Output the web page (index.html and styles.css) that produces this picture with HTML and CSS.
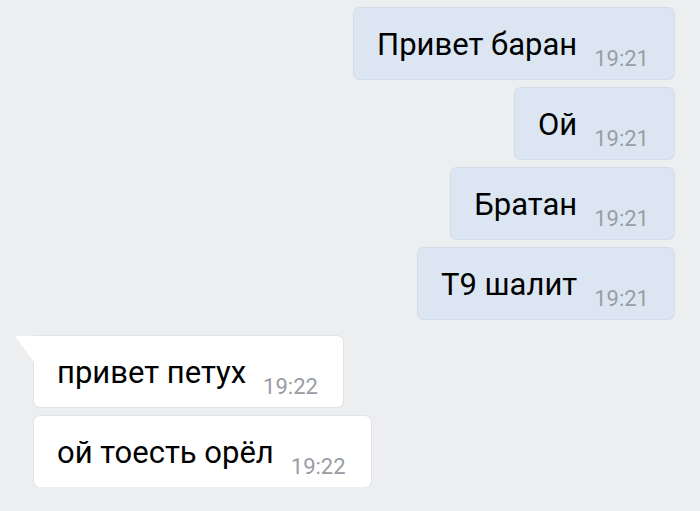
FILE: index.html
```html
<!DOCTYPE html>
<html lang="ru">
<head>
    <meta charset="UTF-8">
    <meta name="viewport" content="width=device-width, initial-scale=1.0">
    <title>Диалог</title>
    <link rel="stylesheet" href="styles.css">
</head>
<body>
    <div class="chat">
        <div class="group outgoing">
            <div class="bubble"><span class="text">Привет баран</span><span class="time">19:21</span></div>
            <div class="bubble"><span class="text">Ой</span><span class="time">19:21</span></div>
            <div class="bubble"><span class="text">Братан</span><span class="time">19:21</span></div>
            <div class="bubble"><span class="text">Т9 шалит</span><span class="time">19:21</span></div>
        </div>
        <div class="group incoming">
            <div class="bubble first"><span class="text">привет петух</span><span class="time">19:22</span></div>
            <div class="bubble"><span class="text">ой тоесть орёл</span><span class="time">19:22</span></div>
        </div>
    </div>
</body>
</html>
```

FILE: styles.css
```css
body {
    margin: 0;
    background-color: #edeef0;
    font-family: Roboto, "Liberation Sans", sans-serif;
}
.chat {
    padding: 8px 26px 0 34px;
}
.group {
    display: flex;
    flex-direction: column;
    gap: 9px;
}
.outgoing {
    align-items: flex-end;
}
.incoming {
    align-items: flex-start;
    margin-top: 17px;
}
.bubble {
    position: relative;
    box-sizing: border-box;
    height: 71px;
    padding: 20px 25px 0 23px;
    line-height: 34px;
    white-space: nowrap;
    border-radius: 6px;
}
.outgoing .bubble {
    background-color: #dce6f3;
    box-shadow: 0 0 0 1px #d2dce9;
}
.incoming .bubble {
    background-color: #fff;
    box-shadow: 0 0 0 1px #e1e3e6;
}
.incoming .first {
    border-top-left-radius: 0;
}
.incoming .first::before {
    content: "";
    position: absolute;
    left: -19px;
    top: 0;
    width: 19px;
    height: 26px;
    background-color: #fff;
    clip-path: polygon(0 0, 100% 0, 100% 100%);
}
.text {
    font-size: 31px;
    color: #000;
}
.time {
    margin-left: 17px;
    font-size: 22px;
    color: #999da3;
    vertical-align: -11px;
}
```
